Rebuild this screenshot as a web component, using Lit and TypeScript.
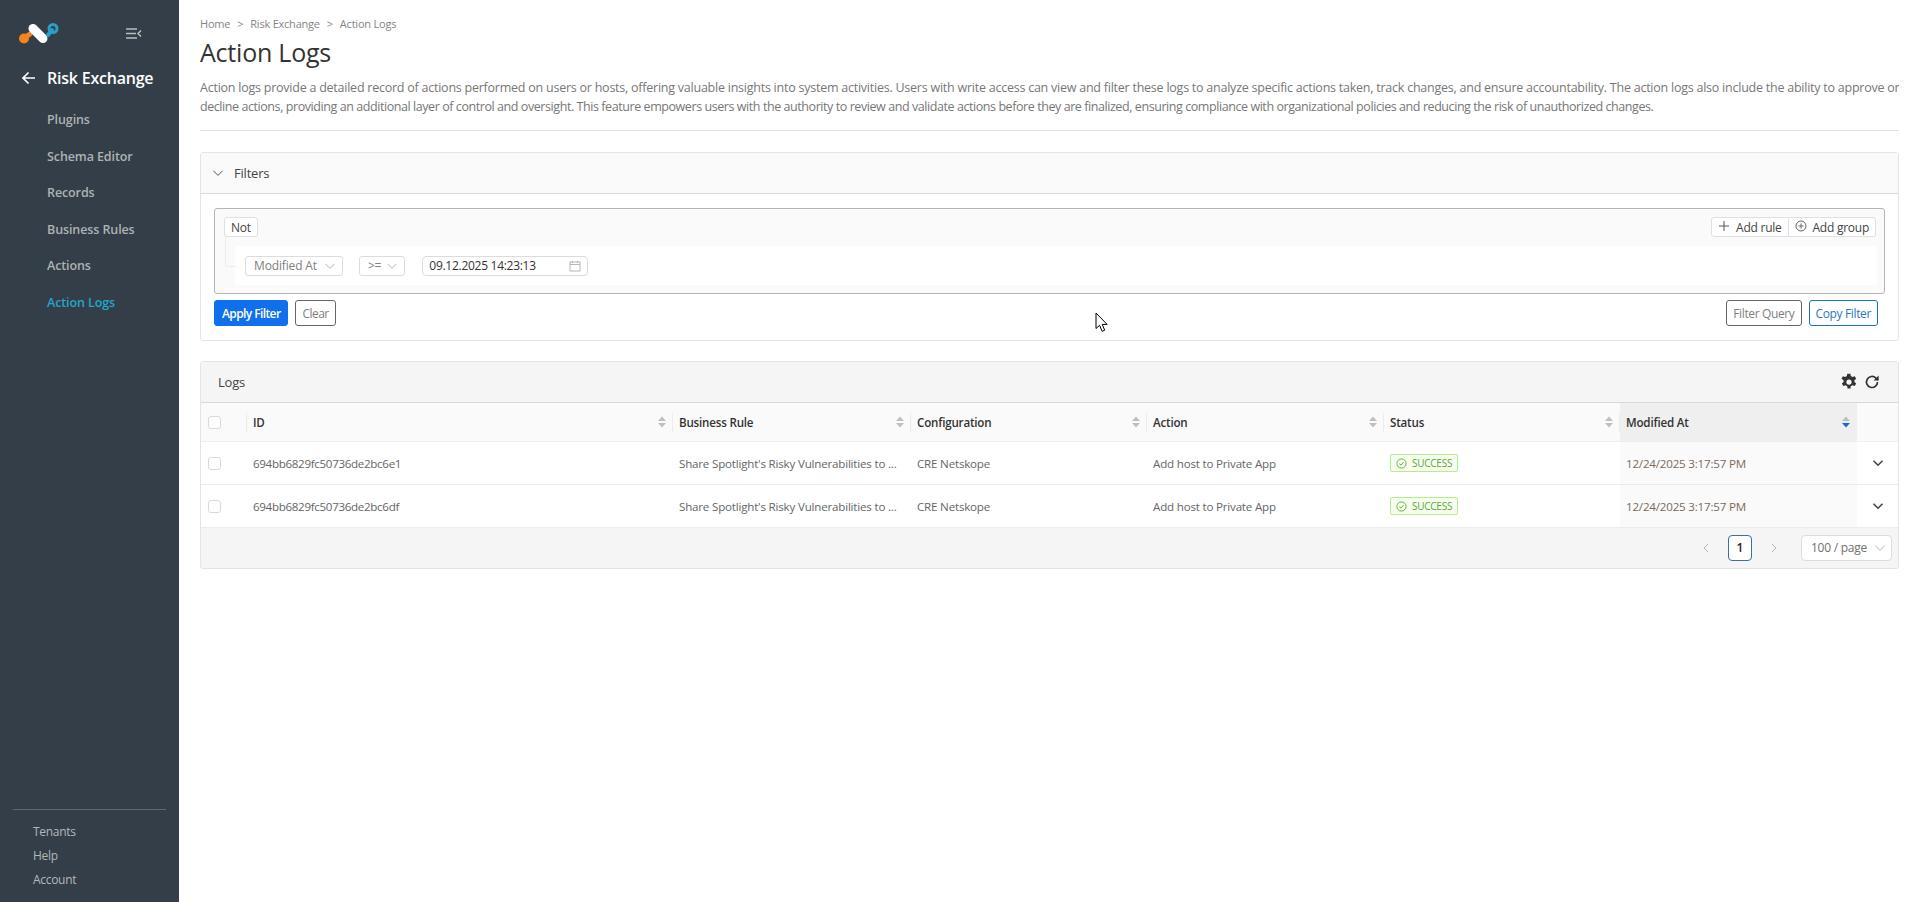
import { LitElement, html, css } from "lit";
import { customElement } from "lit/decorators.js";

const chev = (c = "sel-chev") => html`<svg class="${c}" viewBox="0 0 12 12" width="12" height="12"><path d="M1.5 3.8 6 8.4l4.5-4.6" fill="none" stroke="currentColor" stroke-width="1"/></svg>`;
const sort = (active = false) => html`<svg class="sort" viewBox="0 0 10 14" width="10" height="14"><path d="M5 1.5 9 6H1z" fill="#bfbfbf"/><path d="M5 12.5 1 8h8z" fill="${active ? "#1668dc" : "#bfbfbf"}"/></svg>`;
const rows = ["694bb6829fc50736de2bc6e1", "694bb6829fc50736de2bc6df"];
const cols = ["ID", "Business Rule", "Configuration", "Action", "Status"];

@customElement("app-root")
export class AppRoot extends LitElement {
  static styles = css`
    :host { display: block; font-family: "Open Sans", "Noto Sans", sans-serif; font-size: 12px; color: #555; }
    * { box-sizing: border-box; }
    .page { display: flex; min-height: 902px; position: relative; background: #fff; }
    .side { width: 179px; flex: none; background: #333e48; color: #bfc3c6; display: flex; flex-direction: column; padding-top: 20px; }
    .top { display: flex; align-items: center; height: 26px; padding-left: 18px; gap: 66px; }
    .back { display: flex; align-items: center; gap: 11px; color: #fff; font-size: 16px; font-weight: 600; letter-spacing: -0.22px; margin: 19px 0 0 21px; height: 26px; }
    .nav { display: flex; flex-direction: column; margin-top: 11px; }
    .nav a { height: 36.6px; line-height: 36px; padding-left: 47px; font-size: 12.5px; font-weight: 600; letter-spacing: -0.1px; color: #aeb2b5; }
    .nav a.on { color: #25a5cc; }
    .foot { margin: auto 13px 0; border-top: 1px solid #5d676f; padding: 10px 0 10px 20px; display: flex; flex-direction: column; font-size: 12px; letter-spacing: -0.3px; }
    .foot a { height: 24px; line-height: 24px; color: #b4b8bb; }
    .main { flex: 1; min-width: 0; padding: 16px 20px 0 21px; }
    .crumb { display: flex; gap: 7px; font-size: 11px; letter-spacing: -0.22px; color: #858585; height: 16px; line-height: 16px; }
    h1 { margin: 3px 0 0; font-size: 25px; line-height: 34px; font-weight: 400; color: #333; letter-spacing: -0.22px; }
    .desc { margin: 9px 0 0; font-size: 12.5px; line-height: 19px; color: #777; padding-bottom: 14px; border-bottom: 1px solid #e0e0e0; white-space: nowrap; overflow: hidden; }
    .l1 { letter-spacing: -0.238px; }
    .l2 { letter-spacing: -0.43px; }
    .card { border: 1px solid #e4e4e4; border-radius: 3px; background: #fff; }
    .filters { margin-top: 21px; height: 189px; }
    .fhead { height: 41px; border-bottom: 1px solid #dcdcdc; background: #fafafa; display: flex; align-items: center; padding-left: 11px; gap: 10px; font-size: 13px; color: #444; letter-spacing: -0.2px; }
    .fhead svg { color: #555; }
    .fbody { padding: 14px 13px 0 13px; }
    .qb { height: 86px; border: 1px solid #b4b4b4; border-radius: 3px; background: #fafafa; padding: 8px 8px 0 9px; position: relative; }
    .qtop { display: flex; justify-content: space-between; height: 20px; }
    .mini { border: 1px solid #e0e0e0; border-radius: 3px; background: #fff; display: flex; align-items: center; font-size: 12px; color: #444; letter-spacing: -0.25px; }
    .not { padding: 0 6px; }
    .group { display: flex; }
    .group .mini { gap: 6px; padding: 0 6px; }
    .group .mini + .mini { border-left: none; border-radius: 0 3px 3px 0; }
    .group .mini:first-child { border-radius: 3px 0 0 3px; }
    .group svg { color: #555; margin-top: -3px; }
    .tree { position: absolute; left: 10px; top: 28px; width: 12px; height: 30px; border: 1px solid #ededed; border-top: none; border-right: none; border-radius: 0 0 0 3px; }
    .rule { margin: 9px -1px 0 11px; height: 39px; background: #fff; border-radius: 3px; display: flex; align-items: center; padding-left: 10px; gap: 17px; }
    .sel { height: 20px; border: 1px solid #dcdcdc; border-radius: 3px; background: #fff; display: flex; align-items: center; font-size: 12px; color: #808080; padding: 0 6px 0 8px; gap: 7px; letter-spacing: -0.15px; }
    .sel.op { padding-right: 6px; gap: 5px; margin-left: -1px; }
    .sel-chev { color: #b5b5b5; }
    .date { width: 166px; color: #333; justify-content: space-between; padding: 0 6px; border-radius: 4px; letter-spacing: -0.28px; }
    .date svg { color: #b0b0b0; }
    .actions { display: flex; align-items: center; gap: 7px; margin-top: 6px; padding-right: 7px; }
    .btn { height: 26px; border-radius: 3px; border: 1px solid #666; background: #fff; color: #808080; font-size: 12px; padding: 0 6px; display: flex; align-items: center; letter-spacing: -0.36px; }
    .btn.primary { background: #0f6fec; border-color: #0f6fec; color: #fff; font-weight: 600; padding: 0 7px; letter-spacing: -0.6px; }
    .btn.link { border-color: #1a73c8; color: #2a78c2; }
    .btn.clear { padding: 0 6px; letter-spacing: -0.55px; }
    .spacer { flex: 1; }
    .logs { margin-top: 20px; height: 208px; background: #f5f5f5; }
    .lhead { height: 41px; display: flex; align-items: center; padding: 0 18px 0 17px; font-size: 13px; color: #444; background: #f5f5f5; justify-content: space-between; letter-spacing: -0.2px; border-bottom: 1px solid #d8d8d8; }
    .tools { display: flex; gap: 6px; align-items: center; color: #333; }
    .grid { display: grid; grid-template-columns: 46px 426px 238px 236px 237px 236px 237px 1fr; background: #fff; }
    .th { height: 39px; background: #fafafa; border-bottom: 1px solid #efefef; display: flex; align-items: center; padding: 0 6px; font-weight: 600; color: #333; font-size: 11.6px; letter-spacing: -0.2px; position: relative; justify-content: space-between; }
    .th.sep::after { content: ""; position: absolute; right: 0; top: 10px; height: 19px; width: 1px; background: #ececec; }
    .th.active { background: #efefef; }
    .td { height: 43px; border-bottom: 1px solid #ececec; display: flex; align-items: center; padding-left: 6px; font-size: 11.6px; color: #666; letter-spacing: -0.2px; white-space: nowrap; overflow: hidden; background: #fff; }
    .td.id { letter-spacing: -0.32px; }
    .td.active { background: #fafafa; color: #7a6a5e; }
    .ck { padding-left: 7px; }
    .box { display: block; width: 13px; height: 13px; border: 1px solid #d9d9d9; border-radius: 3px; background: #fff; }
    .tag { height: 18px; display: inline-flex; align-items: center; gap: 5px; padding: 0 5px; border: 1px solid #b7eb8f; background: #f6ffed; color: #5aa838; border-radius: 2px; font-size: 10px; letter-spacing: -0.25px; }
    .exp { justify-content: center; color: #444; padding-left: 0; }
    .exp svg { margin-left: 1px; }
    .pager { height: 39px; background: #f5f5f5; display: flex; align-items: center; justify-content: flex-end; padding-right: 6px; color: #b5b5b5; }
    .pg { width: 24px; height: 26px; display: flex; align-items: center; justify-content: center; border: 1px solid #3f6f9e; border-radius: 4px; background: #fff; color: #222; font-weight: 600; margin: 0 17px; font-size: 12px; }
    .psel { width: 91px; height: 26px; margin-left: 22px; background: #fff; border: 1px solid #dcdcdc; border-radius: 4px; display: flex; align-items: center; padding: 0 5px 0 9px; justify-content: space-between; color: #707070; font-size: 12px; letter-spacing: -0.25px; }
    .cursor { position: absolute; left: 1095px; top: 312px; }
  `;

  render() {
    return html`<div class="page">
      <aside class="side">
        <div class="top">
          <svg width="42" height="26" viewBox="0 0 42 26">
            <path d="M5 19 L12 14" stroke="#f5841f" stroke-width="5" stroke-linecap="round"/>
            <circle cx="6" cy="18.5" r="5" fill="#f5841f"/>
            <path d="M15 8.5 L25 18.5" stroke="#fff" stroke-width="9" stroke-linecap="round"/>
            <path d="M30 15 L34 10" stroke="#2a9fc9" stroke-width="4" stroke-linecap="round"/>
            <circle cx="35" cy="8.5" r="4" fill="none" stroke="#2a9fc9" stroke-width="3"/>
          </svg>
          <svg width="16" height="11" viewBox="0 0 16 11" fill="none" stroke="#b9bdc0" stroke-width="1.5"><path d="M0 1h11M0 5.5h10M0 10h11M15 2.5 12 5.5l3 3"/></svg>
        </div>
        <div class="back">
          <svg width="15" height="14" viewBox="0 0 15 14" fill="none" stroke="#fff" stroke-width="1.7"><path d="M14 7H2M7.5 1.5 2 7l5.5 5.5"/></svg>
          <span>Risk Exchange</span>
        </div>
        <nav class="nav">
          <a>Plugins</a><a>Schema Editor</a><a>Records</a><a>Business Rules</a><a>Actions</a><a class="on">Action Logs</a>
        </nav>
        <div class="foot"><a>Tenants</a><a>Help</a><a>Account</a></div>
      </aside>
      <main class="main">
        <div class="crumb"><span>Home</span><span>&gt;</span><span>Risk Exchange</span><span>&gt;</span><span>Action Logs</span></div>
        <h1>Action Logs</h1>
        <p class="desc"><span class="l1">Action logs provide a detailed record of actions performed on users or hosts, offering valuable insights into system activities. Users with write access can view and filter these logs to analyze specific actions taken, track changes, and ensure accountability. The action logs also include the ability to approve or</span><br><span class="l2">decline actions, providing an additional layer of control and oversight. This feature empowers users with the authority to review and validate actions before they are finalized, ensuring compliance with organizational policies and reducing the risk of unauthorized changes.</span></p>
        <section class="card filters">
          <div class="fhead">${chev("")}<span>Filters</span></div>
          <div class="fbody">
            <div class="qb">
              <div class="tree"></div>
              <div class="qtop">
                <div class="mini not">Not</div>
                <div class="group">
                  <div class="mini"><svg width="12" height="12" viewBox="0 0 12 12" fill="none" stroke="currentColor"><path d="M6 1v10M1 6h10"/></svg>Add rule</div>
                  <div class="mini"><svg width="12" height="12" viewBox="0 0 12 12" fill="none" stroke="currentColor" stroke-width=".9"><circle cx="6" cy="6" r="5"/><path d="M6 3.5v5M3.5 6h5"/></svg>Add group</div>
                </div>
              </div>
              <div class="rule">
                <div class="sel">Modified At ${chev()}</div>
                <div class="sel op">&gt;= ${chev()}</div>
                <div class="sel date">09.12.2025 14:23:13
                  <svg width="12" height="12" viewBox="0 0 12 12" fill="none" stroke="currentColor" stroke-width=".9"><rect x="1" y="2" width="10" height="9"/><path d="M1 4.5h10M3.5 1v2M8.5 1v2"/></svg>
                </div>
              </div>
            </div>
            <div class="actions">
              <div class="btn primary">Apply Filter</div>
              <div class="btn clear">Clear</div>
              <div class="spacer"></div>
              <div class="btn">Filter Query</div>
              <div class="btn link">Copy Filter</div>
            </div>
          </div>
        </section>
        <section class="card logs">
          <div class="lhead"><span>Logs</span>
            <div class="tools">
              <svg width="18" height="18" viewBox="0 0 24 24" fill="#333"><path fill-rule="evenodd" d="M13.9 1l.5 3a8.3 8.3 0 0 1 2.3 1.3l2.9-1.1 2 3.4-2.4 1.9a8.3 8.3 0 0 1 0 2.6l2.4 1.9-2 3.4-2.9-1.1a8.3 8.3 0 0 1-2.3 1.3l-.5 3h-3.8l-.5-3a8.3 8.3 0 0 1-2.3-1.3l-2.9 1.1-2-3.4 2.4-1.9a8.3 8.3 0 0 1 0-2.6L1.9 7.6l2-3.4 2.9 1.1A8.3 8.3 0 0 1 9.1 4l.5-3zM12 8.5a3.5 3.5 0 1 0 0 7 3.5 3.5 0 0 0 0-7z"/></svg>
              <svg width="16" height="16" viewBox="0 0 16 16" fill="none" stroke="#333" stroke-width="1.7"><path d="M13.5 8a5.5 5.5 0 1 1-1.6-3.9L14 6"/><path d="M14.6 1.6v5h-5" fill="#333" stroke="none"/></svg>
            </div>
          </div>
          <div class="grid">
            <div class="th ck sep"><span class="box"></span></div>
            ${cols.map((c) => html`<div class="th sep"><span>${c}</span>${sort()}</div>`)}
            <div class="th active"><span>Modified At</span>${sort(true)}</div>
            <div class="th"></div>
            ${rows.map((id) => html`
              <div class="td ck"><span class="box"></span></div>
              <div class="td id">${id}</div>
              <div class="td">Share Spotlight's Risky Vulnerabilities to ...</div>
              <div class="td">CRE Netskope</div>
              <div class="td">Add host to Private App</div>
              <div class="td"><span class="tag"><svg width="11" height="11" viewBox="0 0 11 11" fill="none" stroke="currentColor" stroke-width=".9"><circle cx="5.5" cy="5.5" r="4.6"/><path d="M3.4 5.6 5 7.1l2.6-3"/></svg>SUCCESS</span></div>
              <div class="td active">12/24/2025 3:17:57 PM</div>
              <div class="td exp"><svg width="12" height="12" viewBox="0 0 12 12" fill="none" stroke="currentColor" stroke-width="1.6"><path d="M1.5 3.8 6 8.2l4.5-4.4"/></svg></div>
            `)}
          </div>
          <div class="pager">
            <svg width="10" height="10" viewBox="0 0 10 10" fill="none" stroke="currentColor"><path d="M7 1 3 5l4 4"/></svg>
            <div class="pg">1</div>
            <svg width="10" height="10" viewBox="0 0 10 10" fill="none" stroke="currentColor"><path d="M3 1l4 4-4 4"/></svg>
            <div class="psel">100 / page ${chev()}</div>
          </div>
        </section>
      </main>
      <svg class="cursor" width="14" height="21" viewBox="0 0 14 21"><path d="M1 1v15.5l3.6-3.2 2.5 6 2.6-1.1-2.5-5.8h4.9z" fill="#fff" stroke="#000" stroke-width="1"/></svg>
    </div>`;
  }
}
